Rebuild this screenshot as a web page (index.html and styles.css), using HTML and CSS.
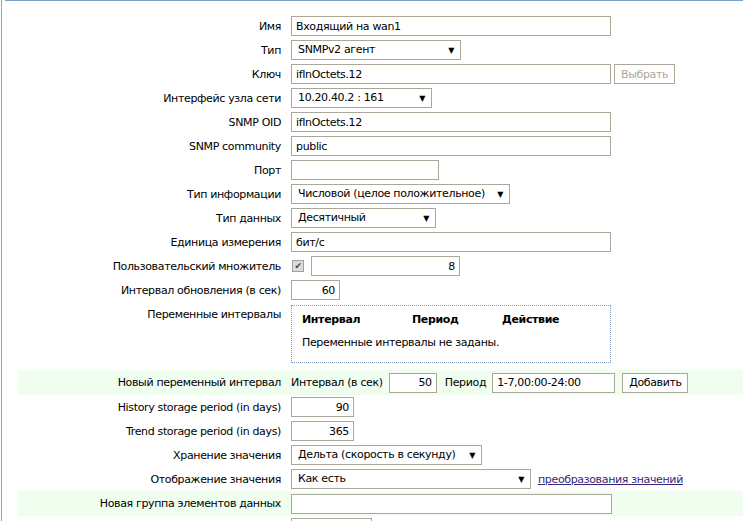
FILE: index.html
```html
<!DOCTYPE html>
<html lang="ru">
<head>
    <meta charset="UTF-8">
    <title>Элемент данных</title>
    <link rel="stylesheet" href="styles.css">
</head>
<body>
    <div class="frame">
        <div class="topline"></div>
        <div class="form">
            <div class="row">
                <label>Имя</label>
                <div class="field"><input class="w320" type="text" value="Входящий на wan1"></div>
            </div>
            <div class="row">
                <label>Тип</label>
                <div class="field"><div class="sel w170">SNMPv2 агент</div></div>
            </div>
            <div class="row">
                <label>Ключ</label>
                <div class="field">
                    <input class="w320" type="text" value="ifInOctets.12">
                    <button class="btn btn-select" disabled>Выбрать</button>
                </div>
            </div>
            <div class="row">
                <label>Интерфейс узла сети</label>
                <div class="field"><div class="sel w141">10.20.40.2 : 161</div></div>
            </div>
            <div class="row">
                <label>SNMP OID</label>
                <div class="field"><input class="w320" type="text" value="ifInOctets.12"></div>
            </div>
            <div class="row">
                <label>SNMP community</label>
                <div class="field"><input class="w320" type="text" value="public"></div>
            </div>
            <div class="row">
                <label>Порт</label>
                <div class="field"><input class="w148" type="text" value=""></div>
            </div>
            <div class="row">
                <label>Тип информации</label>
                <div class="field"><div class="sel w219">Числовой (целое положительное)</div></div>
            </div>
            <div class="row">
                <label>Тип данных</label>
                <div class="field"><div class="sel w145">Десятичный</div></div>
            </div>
            <div class="row">
                <label>Единица измерения</label>
                <div class="field"><input class="w320" type="text" value="бит/с"></div>
            </div>
            <div class="row">
                <label>Пользовательский множитель</label>
                <div class="field">
                    <span class="check">&#10004;</span>
                    <input class="w149 num" type="text" value="8">
                </div>
            </div>
            <div class="row">
                <label>Интервал обновления (в сек)</label>
                <div class="field"><input class="w49 num" type="text" value="60"></div>
            </div>
            <div class="row row-top">
                <label>Переменные интервалы</label>
                <div class="field">
                    <div class="intervals">
                        <div class="int-head">
                            <span class="c1">Интервал</span>
                            <span class="c2">Период</span>
                            <span class="c3">Действие</span>
                        </div>
                        <div class="int-empty">Переменные интервалы не заданы.</div>
                    </div>
                </div>
            </div>
            <div class="row new">
                <label>Новый переменный интервал</label>
                <div class="field">
                    <span class="txt">Интервал (в сек)</span>
                    <input class="w48 num" type="text" value="50">
                    <span class="txt gap">Период</span>
                    <input class="w123" type="text" value="1-7,00:00-24:00">
                    <button class="btn btn-add">Добавить</button>
                </div>
            </div>
            <div class="row">
                <label>History storage period (in days)</label>
                <div class="field"><input class="w63 num" type="text" value="90"></div>
            </div>
            <div class="row">
                <label>Trend storage period (in days)</label>
                <div class="field"><input class="w63 num" type="text" value="365"></div>
            </div>
            <div class="row">
                <label>Хранение значения</label>
                <div class="field"><div class="sel w191">Дельта (скорость в секунду)</div></div>
            </div>
            <div class="row">
                <label>Отображение значения</label>
                <div class="field">
                    <div class="sel w240">Как есть</div>
                    <a href="#" class="link">преобразования значений</a>
                </div>
            </div>
            <div class="row new">
                <label>Новая группа элементов данных</label>
                <div class="field"><input class="w321" type="text" value=""></div>
            </div>
            <div class="row">
                <label></label>
                <div class="field">
                    <div class="listbox"><span class="opt"></span><span class="bar"></span></div>
                </div>
            </div>
        </div>
    </div>
</body>
</html>
```

FILE: styles.css
```css
html, body {
    margin: 0;
    padding: 0;
    background: #fff;
}
body {
    font-family: "DejaVu Sans", Verdana, sans-serif;
    font-size: 11px;
    letter-spacing: -0.35px;
    color: #000;
    overflow: hidden;
    height: 521px;
}
.frame {
    margin-left: 1px;
    border-left: 1px solid #8aa4c2;
    min-height: 521px;
}
.topline {
    margin-left: 3px;
    border-top: 1px solid #7d9dbf;
}
.form {
    padding-top: 13px;
    margin-left: 16px;
}
.row {
    display: grid;
    grid-template-columns: 263px 1fr;
    column-gap: 10px;
    align-items: center;
    min-height: 24px;
}
.row label {
    text-align: right;
    white-space: nowrap;
}
.row-top {
    align-items: start;
    padding-top: 1px;
    padding-bottom: 5px;
}
.row-top label {
    padding-top: 5px;
}
.new {
    background: #effeef;
    min-height: 25px;
}
.field {
    display: flex;
    align-items: center;
    padding: 2px 0;
}
input {
    box-sizing: border-box;
    height: 20px;
    border: 1px solid #aca899;
    padding: 0 4px;
    margin: 0;
    font-family: inherit;
    font-size: 11px;
    letter-spacing: inherit;
    color: #000;
    background: #fff;
    outline: none;
}
input.num {
    text-align: right;
    padding-right: 4px;
}
.sel {
    box-sizing: border-box;
    height: 20px;
    border: 1px solid #aca899;
    padding: 0 20px 0 6px;
    line-height: 18px;
    position: relative;
    white-space: nowrap;
}
.sel::after {
    content: "\25BC";
    position: absolute;
    right: 6px;
    top: 1px;
    font-size: 8px;
}
.w320 { width: 320px; }
.w321 { width: 321px; }
.w170 { width: 170px; }
.w141 { width: 141px; }
.w148 { width: 148px; }
.w219 { width: 219px; }
.w145 { width: 145px; }
.w149 { width: 149px; }
.w49 { width: 49px; }
.w48 { width: 48px; }
.w123 { width: 123px; }
.w63 { width: 63px; }
.w191 { width: 191px; }
.w240 { width: 240px; }
.btn {
    box-sizing: border-box;
    height: 20px;
    border: 1px solid #aca899;
    background: #fff;
    font-family: inherit;
    font-size: 11px;
    letter-spacing: inherit;
    padding: 0 6px;
    color: #000;
}
.btn-select {
    margin-left: 3px;
    width: 61px;
    color: #aca899;
}
.btn-add {
    margin-left: 7px;
    width: 66px;
}
.check {
    box-sizing: border-box;
    width: 12px;
    height: 12px;
    border: 1px solid #a0a0a0;
    background: #dcdcdc;
    color: #444;
    font-size: 9px;
    line-height: 10px;
    text-align: center;
    margin: 0 7px 0 1px;
}
.txt {
    margin-right: 6px;
}
.txt.gap {
    margin-left: 8px;
}
.intervals {
    box-sizing: border-box;
    width: 320px;
    height: 58px;
    border: 1px dotted #7d9dbf;
    padding: 7px 10px 0;
}
.int-head {
    font-weight: bold;
    display: flex;
}
.int-head .c1 { width: 110px; }
.int-head .c2 { width: 90px; }
.int-empty {
    margin-top: 10px;
}
.link {
    margin-left: 7px;
    color: #34277a;
    text-decoration: underline;
}
.listbox {
    box-sizing: border-box;
    width: 81px;
    height: 20px;
    border: 1px solid #aca899;
    display: flex;
    padding: 2px 0 0 2px;
}
.listbox .opt {
    width: 60px;
    height: 4px;
    background: #c8c8c8;
}
.listbox .bar {
    margin-left: 4px;
    width: 14px;
    border-left: 1px solid #ddd;
    background: #f0f0f0;
}
```
